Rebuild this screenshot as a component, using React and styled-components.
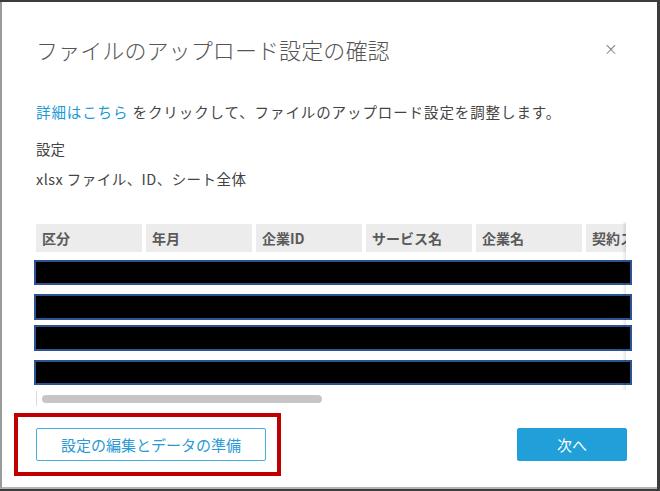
import React from "react";
import styled, { createGlobalStyle } from "styled-components";

const GlobalStyle = createGlobalStyle`
  body {
    margin: 0;
    font-family: "Noto Sans CJK JP", "Noto Sans", sans-serif;
  }
`;

const Screen = styled.div`
  position: relative;
  width: 660px;
  height: 491px;
  overflow: hidden;
  background: #3c3c3c;
  display: flex;
  flex-direction: column;
`;

const Dialog = styled.div`
  margin: 2px 3px 0 0;
  height: 485px;
  background: #fff;
  border-left: 2px solid #9a9a9a;
  border-bottom: 2px solid #b4b4b4;
  display: flex;
  flex-direction: column;
  padding: 0 33px 0 34px;
`;

const Header = styled.div`
  display: flex;
  align-items: center;
  justify-content: space-between;
  padding-top: 31px;
  height: 32px;
`;

const Title = styled.h1`
  margin: 0;
  font-size: 22px;
  font-weight: 300;
  line-height: 32px;
  color: #555;
  letter-spacing: 0.1px;
`;

const Close = styled.span`
  font-size: 17px;
  line-height: 20px;
  color: #777;
  margin: 0 6px 0 0;
  font-family: "DejaVu Sans", sans-serif;
  font-weight: 300;
`;

const Text = styled.p`
  margin: ${(p) => p.$top}px 0 0;
  font-size: 14.5px;
  line-height: 20px;
  color: #444;
  letter-spacing: ${(p) => p.$spacing || 0}px;
`;

const Link = styled.a`
  color: #1a9ad6;
  text-decoration: none;
`;

const TableWrap = styled.div`
  position: relative;
  margin-top: 35px;
  width: 590px;

  &::after {
    content: "";
    position: absolute;
    right: 0;
    top: -2px;
    width: 4px;
    height: 168px;
    background: linear-gradient(to right, rgba(0, 0, 0, 0), rgba(0, 0, 0, 0.1));
  }
`;

const HeadRow = styled.div`
  display: flex;
  gap: 4px;
  overflow: hidden;
  width: 590px;
`;

const HeadCell = styled.div`
  flex: 0 0 106px;
  height: 28px;
  background: #ececec;
  padding-left: 6px;
  box-sizing: border-box;
  font-size: 14px;
  font-weight: 700;
  line-height: 28px;
  color: #5a5a5a;
  white-space: nowrap;
`;

const Row = styled.div`
  margin: ${(p) => p.$gap}px 0 0 -2px;
  width: 598px;
  height: ${(p) => p.$h}px;
  box-sizing: border-box;
  background: #000;
  border: 2px solid #2c5393;
`;

const Track = styled.div`
  margin-top: 6px;
  height: 15px;
  border-left: 1px solid #dcdcdc;
  display: flex;
  align-items: center;
  padding-left: 5px;
`;

const Thumb = styled.div`
  width: 280px;
  height: 8px;
  border-radius: 4px;
  background: #c6c6c6;
`;

const Footer = styled.div`
  display: flex;
  justify-content: space-between;
  margin: 22px -3px 0 0;
`;

const Button = styled.button`
  height: 33px;
  width: ${(p) => p.$w}px;
  border-radius: 2px;
  font-family: inherit;
  font-size: 15px;
  border: 1px solid ${(p) => (p.$primary ? "#209fd8" : "#45ace0")};
  background: ${(p) => (p.$primary ? "#209fd8" : "#fff")};
  color: ${(p) => (p.$primary ? "#fff" : "#2a9ad6")};
`;

const Highlight = styled.div`
  position: absolute;
  left: 14px;
  top: 413px;
  width: 267px;
  height: 63px;
  box-sizing: border-box;
  border: 4px solid #c00000;
  pointer-events: none;
`;

const columns = ["区分", "年月", "企業ID", "サービス名", "企業名", "契約ステータス"];
const rows = [
  { gap: 8, h: 25 },
  { gap: 9, h: 26 },
  { gap: 5, h: 26 },
  { gap: 9, h: 25 },
];

const App = () => {
  return (
    <Screen>
      <GlobalStyle />
      <Dialog>
        <Header>
          <Title>ファイルのアップロード設定の確認</Title>
          <Close>×</Close>
        </Header>
        <Text $top={37} $spacing={0.9}>
          <Link href="#">詳細はこちら</Link> をクリックして、ファイルのアップロード設定を調整します。
        </Text>
        <Text $top={17}>設定</Text>
        <Text $top={10} $spacing={0.45}>
          xlsx ファイル、ID、シート全体
        </Text>
        <TableWrap>
          <HeadRow>
            {columns.map((c) => (
              <HeadCell key={c}>{c}</HeadCell>
            ))}
          </HeadRow>
          {rows.map((r, i) => (
            <Row key={i} $gap={r.gap} $h={r.h} />
          ))}
          <Track>
            <Thumb />
          </Track>
        </TableWrap>
        <Footer>
          <Button $w={230}>設定の編集とデータの準備</Button>
          <Button $w={110} $primary>
            次へ
          </Button>
        </Footer>
      </Dialog>
      <Highlight />
    </Screen>
  );
};

export default App;
